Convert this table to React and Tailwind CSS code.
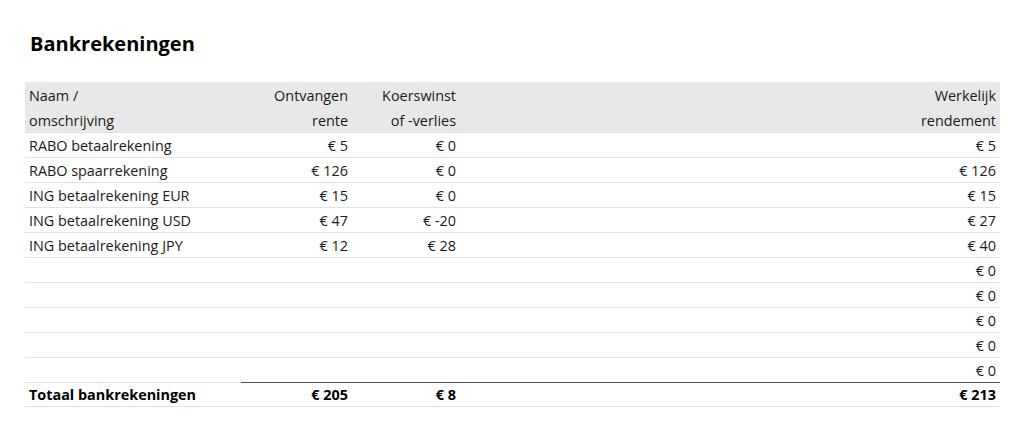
export default function App() {
  const rows = [
    ["RABO betaalrekening", "€ 5", "€ 0", "€ 5"],
    ["RABO spaarrekening", "€ 126", "€ 0", "€ 126"],
    ["ING betaalrekening EUR", "€ 15", "€ 0", "€ 15"],
    ["ING betaalrekening USD", "€ 47", "€ -20", "€ 27"],
    ["ING betaalrekening JPY", "€ 12", "€ 28", "€ 40"],
    ["", "", "", "€ 0"],
    ["", "", "", "€ 0"],
    ["", "", "", "€ 0"],
    ["", "", "", "€ 0"],
    ["", "", "", "€ 0"],
  ];
  const grid = "grid grid-cols-[216px_111px_108px_1fr]";
  return (
    <div className="w-[1024px] h-[432px] bg-white text-[#1a1a1a] pl-[25px] pr-[24px] pt-[30px]" style={{ fontFamily: '"Open Sans", "Noto Sans", sans-serif' }}>
      <h1 className="text-[20px] font-bold leading-[28px] pl-[5px] text-black">Bankrekeningen</h1>
      <div className="mt-[24px] text-[14.4px]">
        <div className={`${grid} h-[51px] bg-[#e8e8e8] leading-[25px] pt-px border-b border-[#e2e2e2]`}>
          <div className="pl-[4px]">Naam /<br />omschrijving</div>
          <div className="text-right pr-[4px]">Ontvangen<br />rente</div>
          <div className="text-right pr-[4px]">Koerswinst<br />of -verlies</div>
          <div className="text-right pr-[4px]">Werkelijk<br />rendement</div>
        </div>
        {rows.map((r, i) => (
          <div key={i} className={`${grid} h-[25px] leading-[24px] pt-px border-b border-[#e2e2e2]`}>
            <div className="pl-[4px]">{r[0]}</div>
            <div className="text-right pr-[4px]">{r[1]}</div>
            <div className="text-right pr-[4px]">{r[2]}</div>
            <div className="text-right pr-[4px]">{r[3]}</div>
          </div>
        ))}
        <div className={`${grid} h-[25px] leading-[24px] border-b border-[#e2e2e2] font-bold text-black -mt-px`}>
          <div className="pl-[4px] border-t border-transparent">Totaal bankrekeningen</div>
          <div className="text-right pr-[4px] border-t border-[#555]">€ 205</div>
          <div className="text-right pr-[4px] border-t border-[#555]">€ 8</div>
          <div className="text-right pr-[4px] border-t border-[#555]">€ 213</div>
        </div>
      </div>
    </div>
  );
}
